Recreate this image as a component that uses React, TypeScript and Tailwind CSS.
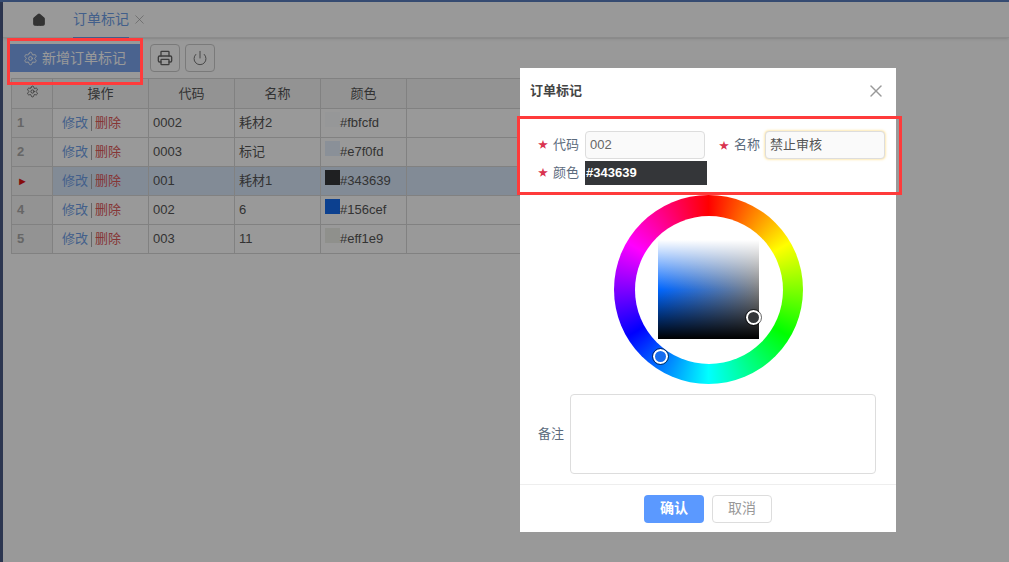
import { Home, X, Printer, Power, Settings } from "lucide-react";

const rows = [
  { no: "1", code: "0002", name: "耗材2", swatch: "bg-[#fbfcfd]", color: "#fbfcfd" },
  { no: "2", code: "0003", name: "标记", swatch: "bg-[#e7f0fd]", color: "#e7f0fd" },
  { no: "3", code: "001", name: "耗材1", swatch: "bg-[#343639]", color: "#343639", active: true },
  { no: "4", code: "002", name: "6", swatch: "bg-[#156cef]", color: "#156cef" },
  { no: "5", code: "003", name: "11", swatch: "bg-[#eff1e9]", color: "#eff1e9" },
];

const font = "font-['Liberation_Sans','Noto_Sans_CJK_SC',sans-serif]";

function Star() {
  return <span className="text-[10px] leading-none text-[#d9334f] mr-[5px]">★</span>;
}

function Table() {
  return (
    <div className="ml-2 w-[512px] border-t border-l border-[#d8d8d8] text-[13px] text-[#555]">
      <div className="flex h-[30px] bg-[#f5f5f5] border-b border-[#d8d8d8] text-center leading-[29px]">
        <div className="w-[41px] border-r border-[#d8d8d8] flex items-center justify-center pb-1">
          <Settings size={13} strokeWidth={1.5} />
        </div>
        <div className="w-[96px] border-r border-[#d8d8d8]">操作</div>
        <div className="w-[86px] border-r border-[#d8d8d8]">代码</div>
        <div className="w-[86px] border-r border-[#d8d8d8]">名称</div>
        <div className="w-[86px] border-r border-[#d8d8d8]">颜色</div>
      </div>
      {rows.map((r) => (
        <div key={r.no} className="flex h-[29px] border-b border-[#d8d8d8] leading-[28px]">
          <div className="w-[41px] shrink-0 border-r border-[#d8d8d8] pl-[5px] font-bold text-[#aaa] bg-[#f5f5f5]">
            {r.active ? <span className="text-[11px] text-[#e01515]">►</span> : r.no}
          </div>
          <div className={`flex flex-1 ${r.active ? "bg-[#d9e8fb]" : ""}`}>
            <div className="w-[96px] border-r border-[#d8d8d8] pl-[9px] flex items-center">
              <span className="text-[#6f9fe8]">修改</span>
              <span className="mx-[3px] h-[15px] w-px bg-[#aaa]" />
              <span className="text-[#e05a5a]">删除</span>
            </div>
            <div className="w-[86px] border-r border-[#d8d8d8] pl-[4px]">{r.code}</div>
            <div className="w-[86px] border-r border-[#d8d8d8] pl-[4px]">{r.name}</div>
            <div className="w-[86px] border-r border-[#d8d8d8] pl-[4px] flex">
              <span className={`w-[15px] h-[15px] mt-[3px] ${r.swatch}`} />
              <span>{r.color}</span>
            </div>
          </div>
        </div>
      ))}
    </div>
  );
}

function ColorWheel() {
  return (
    <div className="relative w-[189px] h-[189px] rounded-full bg-[conic-gradient(#f00,#ff0,#0f0,#0ff,#00f,#f0f,#f00)] flex items-center justify-center">
      <div className="w-[148px] h-[148px] rounded-full bg-white flex items-center justify-center">
        <div className="w-[101px] h-[99px] bg-[linear-gradient(to_bottom,#fff_0%,rgba(255,255,255,0)_50%,rgba(0,0,0,0)_50%,#000_100%),linear-gradient(to_right,#0066ff,#808080)]" />
      </div>
      <span className="absolute left-[132px] top-[115px] w-[15px] h-[15px] rounded-full border-2 border-white outline outline-1 outline-black/60 bg-[#343639]" />
      <span className="absolute left-[39px] top-[154px] w-[15px] h-[15px] rounded-full border-2 border-white outline outline-1 outline-black/60 bg-[#156cef]" />
    </div>
  );
}

export default function App() {
  return (
    <div className={`relative w-[1009px] h-[562px] overflow-hidden bg-white ${font}`}>
      <div className="h-[2px] bg-[#5b7fbf]" />
      <div className="flex h-[560px]">
        <div className="w-[3px] bg-[#4a5a85]" />
        <div className="flex-1">
          <div className="flex h-[36px] items-center border-b border-[#e8e8e8] shadow-sm pl-[29px]">
            <Home size={14} className="text-[#555] fill-[#555]" />
            <div className="ml-[27px] flex h-[36px] items-center border-b border-[#6f9fe8] text-[14px] text-[#6f9fe8]">
              订单标记
            </div>
            <X size={15} strokeWidth={1} className="ml-[3px] text-[#999]" />
          </div>
          <div className="flex items-center h-[40px] ml-[7px] gap-[5px]">
            <div className="flex items-center gap-[4px] w-[131px] h-[28px] bg-[#7ca6ef] text-[14px] text-white pl-[13px]">
              <Settings size={15} strokeWidth={1.5} />
              新增订单标记
            </div>
            <div className="ml-[4px] flex items-center justify-center w-[30px] h-[28px] rounded border border-[#ccc]">
              <Printer size={16} className="text-[#666]" />
            </div>
            <div className="flex items-center justify-center w-[30px] h-[28px] rounded border border-[#ccc]">
              <Power size={16} strokeWidth={1.5} className="text-[#777]" />
            </div>
          </div>
          <Table />
        </div>
      </div>

      {/* dim layer */}
      <div className="absolute inset-0 bg-black/40" />

      {/* dialog */}
      <div className="absolute left-[520px] top-[68px] w-[376px] h-[464px] bg-white flex flex-col">
        <div className="flex items-center justify-between h-[46px] pl-[10px] pr-[10px] text-[13px] font-bold text-[#444]">
          订单标记
          <X size={20} strokeWidth={1.75} className="text-[#999]" />
        </div>
        <div className="h-[81px] pt-[16px] pl-[18px] text-[13px] text-[#5c6b7d]">
          <div className="flex items-center h-[29px]">
            <Star />
            <span className="w-[32px]">代码</span>
            <div className="w-[120px] h-[28px] rounded border border-[#ddd] bg-[#fafafa] pl-[4px] leading-[26px] text-[#666]">002</div>
            <div className="ml-[14px]"><Star /></div>
            <span className="w-[31px]">名称</span>
            <div className="w-[120px] h-[28px] rounded border border-[#ddd] bg-[#fafafa] pl-[4px] leading-[26px] text-[#555] shadow-[0_0_3px_#fbd36a]">禁止审核</div>
          </div>
          <div className="flex items-center h-[24px] mt-[2px]">
            <Star />
            <span className="w-[32px]">颜色</span>
            <div className="w-[122px] h-[24px] bg-[#343639] font-bold text-white leading-[24px] pl-[1px]">#343639</div>
          </div>
        </div>
        <div className="flex justify-center h-[199px] pl-[1px]">
          <ColorWheel />
        </div>
        <div className="flex items-center pl-[18px]">
          <span className="w-[32px] text-[13px] text-[#5c6b7d]">备注</span>
          <div className="w-[306px] h-[80px] rounded border border-[#ddd]" />
        </div>
        <div className="mt-[10px] flex flex-1 items-center justify-center gap-[8px] border-t border-[#eee] text-[14px]">
          <div className="flex items-center justify-center w-[60px] h-[28px] rounded bg-[#5b99ff] font-bold text-white">确认</div>
          <div className="flex items-center justify-center w-[60px] h-[28px] rounded border border-[#ddd] text-[#999]">取消</div>
        </div>
      </div>

      {/* red callouts */}
      <div className="absolute left-[7px] top-[38px] w-[136px] h-[47px] border-[3px] border-[#ff3b3b]" />
      <div className="absolute left-[517px] top-[116px] w-[385px] h-[79px] border-[3px] border-[#ff3b3b]" />
    </div>
  );
}
